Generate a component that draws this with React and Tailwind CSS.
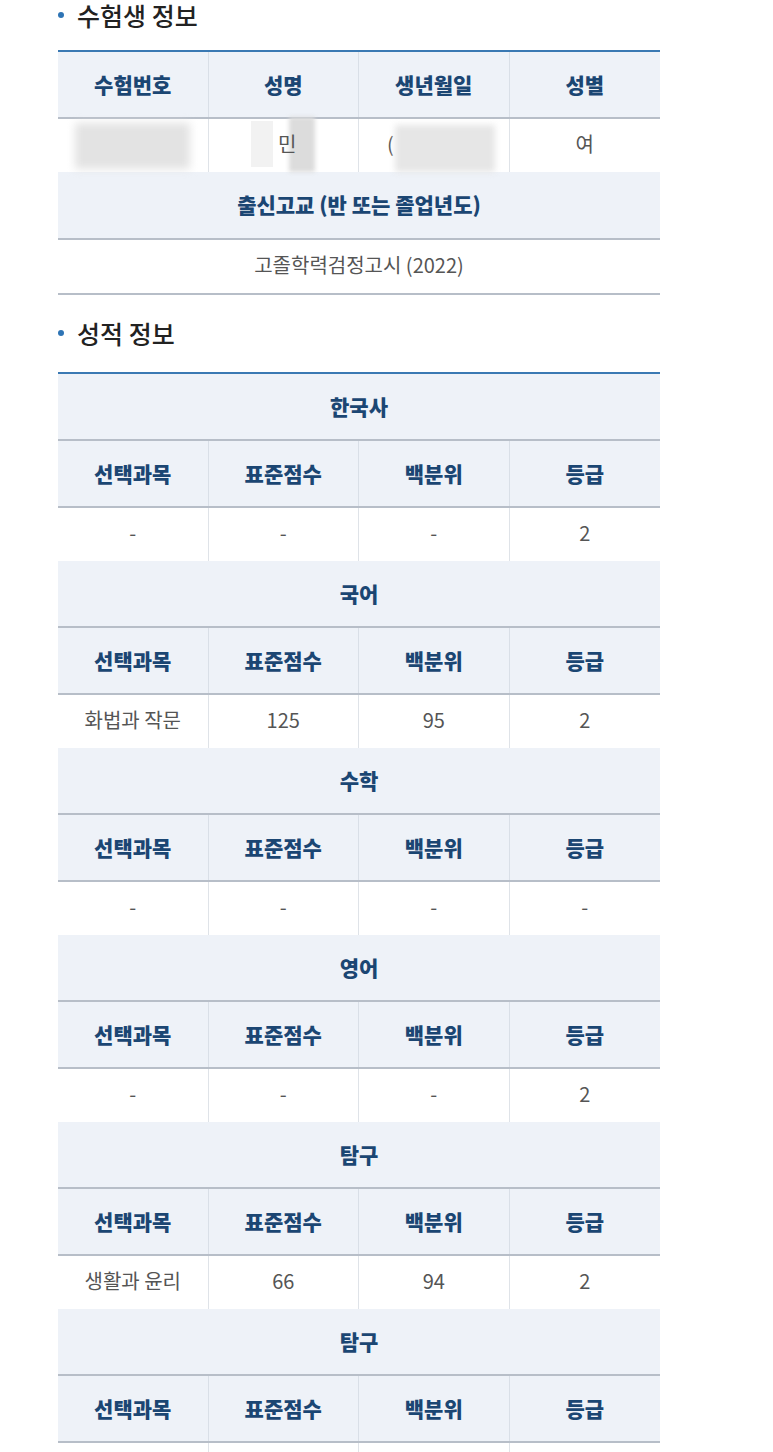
const FONT = { fontFamily: '"Noto Sans CJK KR", "Noto Sans", sans-serif' };

function Title({ children }) {
  return (
    <div className="flex items-center h-[30px] pl-[58px]">
      <span className="w-[6px] h-[6px] rounded-full bg-[#2e74b5] mr-[13px]" />
      <span className="text-[25px] leading-[30px] font-medium text-[#222]">{children}</span>
    </div>
  );
}

function HeadRow({ cells, h = "h-[65px]" }) {
  return (
    <div className={`grid grid-cols-4 ${h} bg-[#eef2f8]`}>
      {cells.map((c, i) => (
        <div
          key={i}
          className={`flex items-center justify-center text-[21px] font-black text-[#1b4673] ${i < 3 ? "border-r border-[#d9dfe7]" : ""}`}
        >
          {c}
        </div>
      ))}
    </div>
  );
}

function SpanHead({ children, h = "h-[65px]" }) {
  return (
    <div className={`${h} bg-[#eef2f8] flex items-center justify-center text-[21px] font-black text-[#1b4673]`}>
      {children}
    </div>
  );
}

function Line() {
  return <div className="h-[2px] bg-[#b7bec8]" />;
}

function DataRow({ cells }) {
  return (
    <div className="grid grid-cols-4 h-[53px] bg-white">
      {cells.map((c, i) => (
        <div
          key={i}
          className={`flex items-center justify-center pb-[3px] text-[20px] text-[#555] ${i < 3 ? "border-r border-[#dfe3e8]" : ""}`}
        >
          {c}
        </div>
      ))}
    </div>
  );
}

const SUB = ["선택과목", "표준점수", "백분위", "등급"];

const blocks = [
  { name: "한국사", row: ["-", "-", "-", "2"] },
  { name: "국어", row: ["화법과 작문", "125", "95", "2"] },
  { name: "수학", row: ["-", "-", "-", "-"] },
  { name: "영어", row: ["-", "-", "-", "2"] },
  { name: "탐구", row: ["생활과 윤리", "66", "94", "2"] },
  { name: "탐구", row: null },
];

export default function App() {
  return (
    <div className="w-[773px] h-[1452px] bg-white overflow-hidden" style={FONT}>
      <Title>수험생 정보</Title>
      <div className="mt-[20px] ml-[58px] w-[602px]">
        <div className="h-[2px] bg-[#3a79b3]" />
        <HeadRow cells={["수험번호", "성명", "생년월일", "성별"]} />
        <Line />
        <div className="grid grid-cols-4 h-[53px] bg-white">
          <div className="relative flex items-center justify-center border-r border-[#dfe3e8]">
            <div className="absolute left-[17px] top-[4px] w-[115px] h-[46px] bg-[#e3e3e3] blur-[4px]" />
          </div>
          <div className="relative flex items-center justify-center pb-[3px] border-r border-[#dfe3e8] text-[20px] text-[#555]">
            <div className="absolute left-[42px] top-[2px] w-[22px] h-[46px] bg-[#f2f2f2]" />
            <div className="absolute left-[80px] top-[-2px] w-[26px] h-[55px] bg-[#dcdcdc] blur-[2px]" />
            <span className="relative ml-[8px]">민</span>
          </div>
          <div className="relative flex items-center pb-[3px] border-r border-[#dfe3e8] text-[20px] text-[#555]">
            <span className="ml-[28px]">(</span>
            <div className="absolute left-[36px] top-[6px] w-[100px] h-[47px] bg-[#e6e6e6] blur-[3px]" />
          </div>
          <div className="flex items-center justify-center pb-[3px] text-[20px] text-[#555]">여</div>
        </div>
        <SpanHead h="h-[66px]">출신고교 (반 또는 졸업년도)</SpanHead>
        <Line />
        <div className="h-[53px] flex items-center justify-center pb-[3px] text-[20px] text-[#555]">
          고졸학력검정고시 (2022)
        </div>
        <Line />
      </div>

      <div className="mt-[23px]">
        <Title>성적 정보</Title>
      </div>
      <div className="mt-[24px] ml-[58px] w-[602px]">
        <div className="h-[2px] bg-[#3a79b3]" />
        {blocks.map((b, i) => (
          <div key={i}>
            <SpanHead>{b.name}</SpanHead>
            <Line />
            <HeadRow cells={SUB} />
            <Line />
            {b.row ? <DataRow cells={b.row} /> : <DataRow cells={["", "", "", ""]} />}
          </div>
        ))}
      </div>
    </div>
  );
}
